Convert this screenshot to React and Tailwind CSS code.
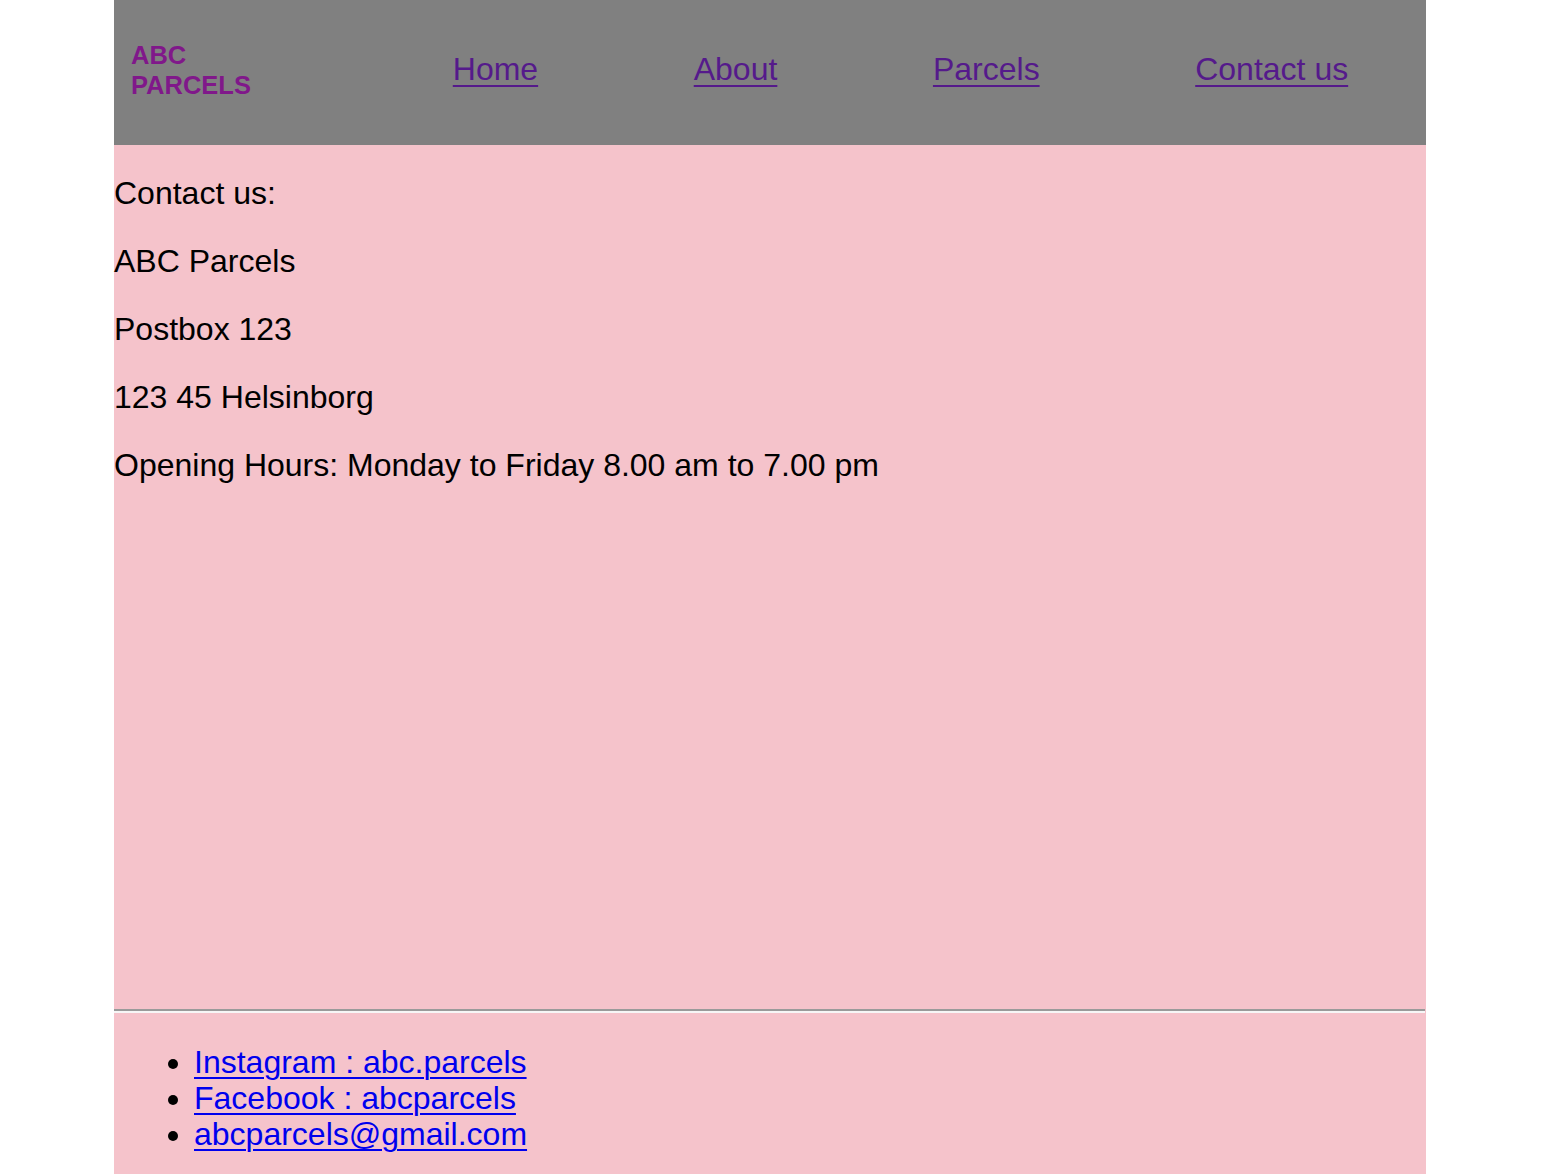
const navLinks = ["Home", "About", "Parcels", "Contact us"];

const contactLines = [
  "Contact us:",
  "ABC Parcels",
  "Postbox 123",
  "123 45 Helsinborg",
  "Opening Hours: Monday to Friday 8.00 am to 7.00 pm",
];

const socials = [
  "Instagram : abc.parcels",
  "Facebook : abcparcels",
  "abcparcels@gmail.com",
];

export default function App() {
  return (
    <div className="min-h-screen bg-white font-['Liberation_Sans',Arial,sans-serif]">
      <div className="ml-[114px] w-[1312px] bg-[#f5c3cb] min-h-[1174px]">
        {/* Header */}
        <header className="flex items-center h-[145px] bg-[#808080]">
          <div className="w-[261px] pl-[17px] pb-[6px]">
            <div className="text-[25.5px] leading-[30px] font-bold text-[#80188a]">
              ABC
              <br />
              PARCELS
            </div>
          </div>
          <nav className="flex-1 flex justify-around items-center pb-[6px]">
            {navLinks.map((link) => (
              <a
                key={link}
                href="#"
                className="text-[32px] leading-[37px] text-[#551a8b] underline decoration-2 underline-offset-[5px]"
              >
                {link}
              </a>
            ))}
          </nav>
        </header>

        {/* Contact info */}
        <main className="h-[864px] pt-[30px]">
          {contactLines.map((line) => (
            <p key={line} className="text-[32px] leading-[37px] text-black mb-[31px]">
              {line}
            </p>
          ))}
        </main>

        <hr className="h-0 border-0 border-t-2 border-t-[#9a9a9a] border-b-2 border-b-[#f6f6f6] mr-[1px]" />

        {/* Footer */}
        <footer className="pt-[31px] pb-[22px]">
          <ul className="list-disc pl-[80px] text-[32px] leading-[36px]">
            {socials.map((s) => (
              <li key={s}>
                <a href="#" className="text-[#0000ee] underline decoration-2 underline-offset-[4px]">
                  {s}
                </a>
              </li>
            ))}
          </ul>
        </footer>
      </div>
    </div>
  );
}
